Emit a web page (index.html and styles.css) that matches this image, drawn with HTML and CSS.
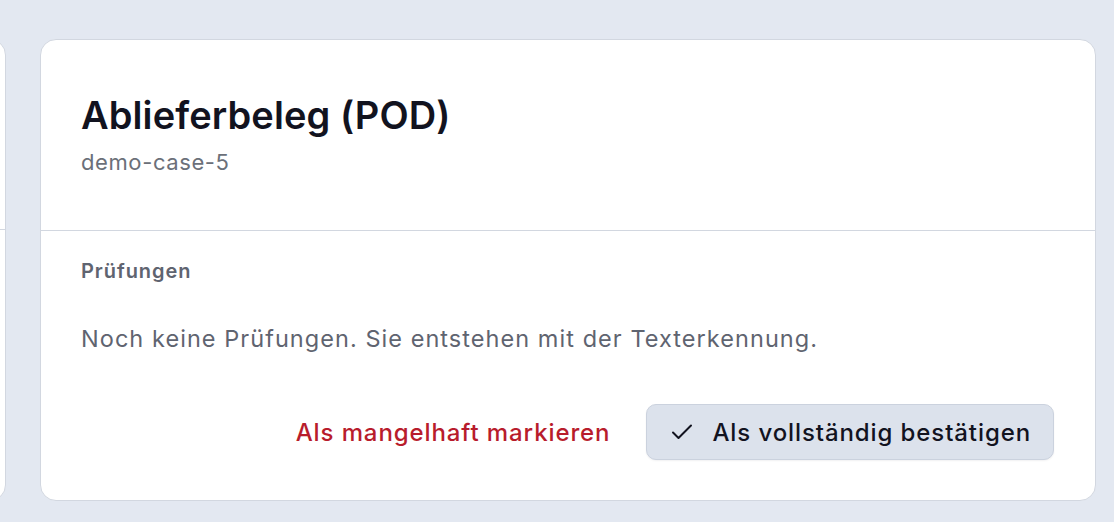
FILE: index.html
```html
<!DOCTYPE html>
<html lang="de">
<head>
<meta charset="utf-8">
<title>Ablieferbeleg</title>
<link rel="stylesheet" href="styles.css">
</head>
<body>
<div class="layout">
  <section class="card card-side">
    <div class="side-head"></div>
    <div class="side-body"></div>
  </section>
  <section class="card card-main">
    <header class="card-head">
      <h1 class="title">Ablieferbeleg (POD)</h1>
      <div class="subtitle">demo-case-5</div>
    </header>
    <div class="card-body">
      <h2 class="section-label">Prüfungen</h2>
      <p class="empty">Noch keine Prüfungen. Sie entstehen mit der Texterkennung.</p>
      <div class="actions">
        <button class="btn-link" type="button">Als mangelhaft markieren</button>
        <button class="btn-confirm" type="button">
          <svg class="check" viewBox="0 0 22 22" width="22" height="22" aria-hidden="true"><path d="M2 11.5l5.5 5.5L20 4.5" fill="none" stroke="currentColor" stroke-width="2" stroke-linecap="round" stroke-linejoin="round"/></svg>
          <span>Als vollständig bestätigen</span>
        </button>
      </div>
    </div>
  </section>
</div>
</body>
</html>
```
FILE: styles.css
```css
* { box-sizing: border-box; }
html, body { margin: 0; padding: 0; }
body {
  background: #e3e8f1;
  font-family: Inter, "Noto Sans", "Liberation Sans", sans-serif;
  width: 1114px;
  height: 522px;
  overflow: hidden;
}
.layout {
  display: flex;
  align-items: flex-start;
  gap: 34px;
  padding-top: 39px;
}
.card {
  background: #ffffff;
  border: 1.5px solid #d2d7e0;
  border-radius: 16px;
  flex: none;
}
.card-side {
  width: 300px;
  margin-left: -294px;
  height: 462px;
  display: flex;
  flex-direction: column;
}
.side-head { height: 190px; border-bottom: 1.5px solid #d2d7e0; }
.card-main {
  width: 1056px;
  height: 462px;
  display: flex;
  flex-direction: column;
}
.card-head {
  height: 191px;
  padding: 52px 40px 0;
  border-bottom: 1.5px solid #d2d7e0;
}
.title {
  margin: 0;
  font-size: 38px;
  line-height: 46px;
  font-weight: 600;
  color: #12131f;
  letter-spacing: 0.1px;
}
.subtitle {
  margin-top: 10px;
  font-size: 22px;
  line-height: 28px;
  color: #6b7079;
  letter-spacing: 0.6px;
}
.card-body {
  padding: 27px 40px 0;
}
.section-label {
  margin: 0;
  font-size: 20px;
  line-height: 26px;
  font-weight: 600;
  color: #5f6470;
  letter-spacing: 0.95px;
}
.empty {
  margin: 40px 0 0;
  font-size: 23.5px;
  line-height: 30px;
  color: #5f6470;
  letter-spacing: 1.05px;
}
.actions {
  margin-top: 50px;
  display: flex;
  justify-content: flex-end;
  align-items: center;
  gap: 36px;
  padding-right: 1px;
}
.btn-link {
  background: none;
  border: 0;
  padding: 0;
  font-family: inherit;
  font-size: 24px;
  font-weight: 500;
  color: #b81c2c;
  letter-spacing: 0.9px;
  cursor: pointer;
}
.btn-confirm {
  display: flex;
  align-items: center;
  gap: 19px;
  height: 56px;
  padding: 0 22px 0 24px;
  background: #dce2ec;
  border: 1.5px solid #cbd2de;
  border-radius: 10px;
  font-family: inherit;
  font-size: 24px;
  font-weight: 500;
  color: #12131f;
  letter-spacing: 0.9px;
  box-shadow: 0 1px 2px rgba(16, 24, 40, 0.06);
  cursor: pointer;
}
.check { color: #12131f; flex: none; }
```
